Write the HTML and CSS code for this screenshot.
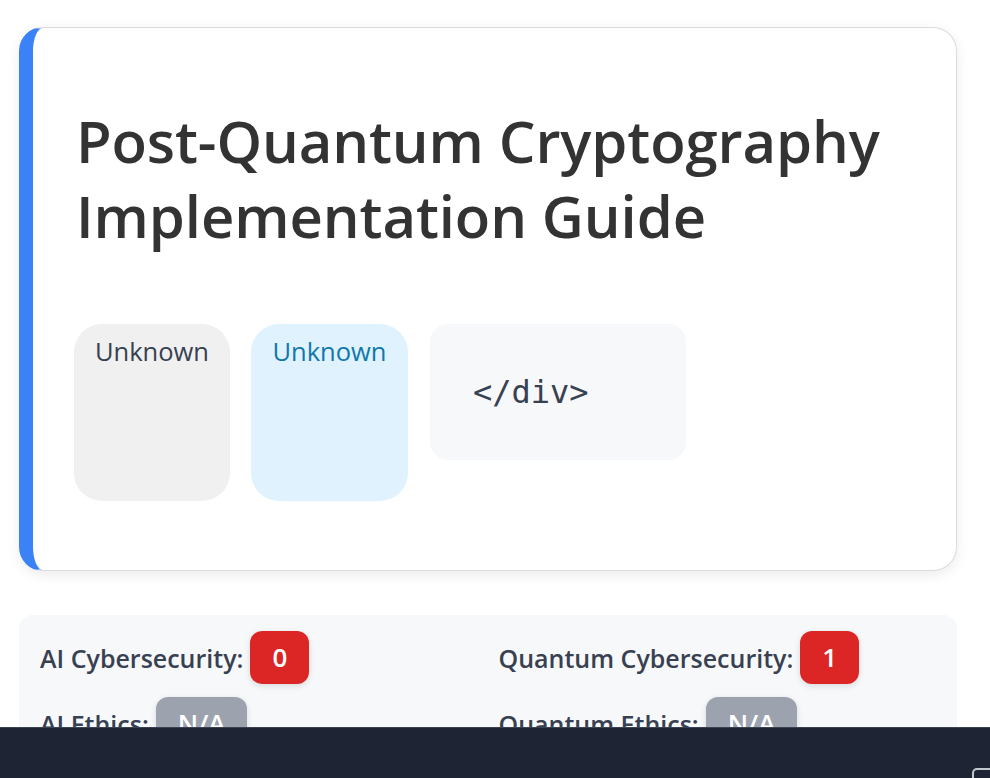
FILE: index.html
```html
<!DOCTYPE html>
<html lang="en">
<head>
<meta charset="utf-8">
<title>Post-Quantum Cryptography Implementation Guide</title>
<link rel="stylesheet" href="styles.css">
</head>
<body>
<main class="page">
  <section class="card">
    <h1 class="title">Post-Quantum Cryptography Implementation Guide</h1>
    <div class="tags">
      <span class="pill pill-gray">Unknown</span>
      <span class="pill pill-blue">Unknown</span>
      <div class="code-box"><code>&lt;/div&gt;</code></div>
    </div>
  </section>

  <section class="scores">
    <div class="score"><span class="label">AI Cybersecurity:</span><span class="badge badge-red">0</span></div>
    <div class="score"><span class="label">Quantum Cybersecurity:</span><span class="badge badge-red">1</span></div>
    <div class="score"><span class="label">AI Ethics:</span><span class="badge badge-gray">N/A</span></div>
    <div class="score"><span class="label">Quantum Ethics:</span><span class="badge badge-gray">N/A</span></div>
  </section>
</main>
<footer class="bottom-bar">
  <span class="bar-button"></span>
</footer>
</body>
</html>
```
FILE: styles.css
```css
* { box-sizing: border-box; }

html, body {
  margin: 0;
  padding: 0;
  background: #ffffff;
  font-family: "Open Sans", "Noto Sans", sans-serif;
  overflow: hidden;
  height: 100%;
}

.page {
  padding: 27px 33px 0 19px;
}

.card {
  background: #ffffff;
  border: 1px solid #dcdcdc;
  border-left: 14px solid #3b82f6;
  border-radius: 24px;
  box-shadow: 0 4px 14px rgba(0, 0, 0, 0.08);
  padding: 75px 40px 69px 43px;
}

.title {
  margin: 0;
  font-size: 58px;
  line-height: 75px;
  font-weight: 600;
  color: #333333;
  letter-spacing: -0.1px;
}

.tags {
  display: flex;
  align-items: flex-start;
  gap: 21px;
  margin-top: 71px;
  margin-left: -2px;
}

.pill {
  display: block;
  width: 156px;
  height: 177px;
  padding: 10px 6px 0;
  border-radius: 28px;
  font-size: 25.5px;
  line-height: 34px;
  text-align: center;
}

.pill-gray {
  background: #f0f0f0;
  color: #374151;
}

.pill-blue {
  width: 157px;
  background: #e0f2fe;
  color: #0f78ad;
}

.code-box {
  width: 256px;
  height: 136px;
  margin-left: 1px;
  background: #f7f8fa;
  border-radius: 18px;
  padding: 49px 20px 0 43px;
}

.code-box code {
  font-family: "DejaVu Sans Mono", monospace;
  font-size: 32px;
  line-height: 38px;
  color: #374151;
}

.scores {
  margin-top: 44px;
  background: #f7f8fa;
  border-radius: 14px;
  padding: 16px 21px 20px;
  display: grid;
  grid-template-columns: 1fr 1fr;
  column-gap: 21px;
  row-gap: 13px;
}

.score {
  display: flex;
  align-items: center;
  gap: 7px;
}

.label {
  font-size: 25px;
  font-weight: 600;
  color: #374151;
  line-height: 34px;
}

.badge {
  display: inline-block;
  height: 53px;
  padding: 0 22px;
  border-radius: 12px;
  font-size: 26px;
  font-weight: 600;
  line-height: 53px;
  text-align: center;
  color: #ffffff;
  box-shadow: 0 2px 6px rgba(0, 0, 0, 0.12);
}

.badge-red { background: #dc2626; }
.badge-gray { background: #9ca3af; }

.bottom-bar {
  position: fixed;
  left: 0;
  right: 0;
  bottom: 0;
  height: 51px;
  background: #1e2433;
  border-top: 1px solid #3a4150;
  overflow: hidden;
}

.bar-button {
  position: absolute;
  left: 972px;
  top: 40px;
  width: 26px;
  height: 26px;
  border: 2px solid #c3c7ce;
  border-radius: 5px;
}
```
